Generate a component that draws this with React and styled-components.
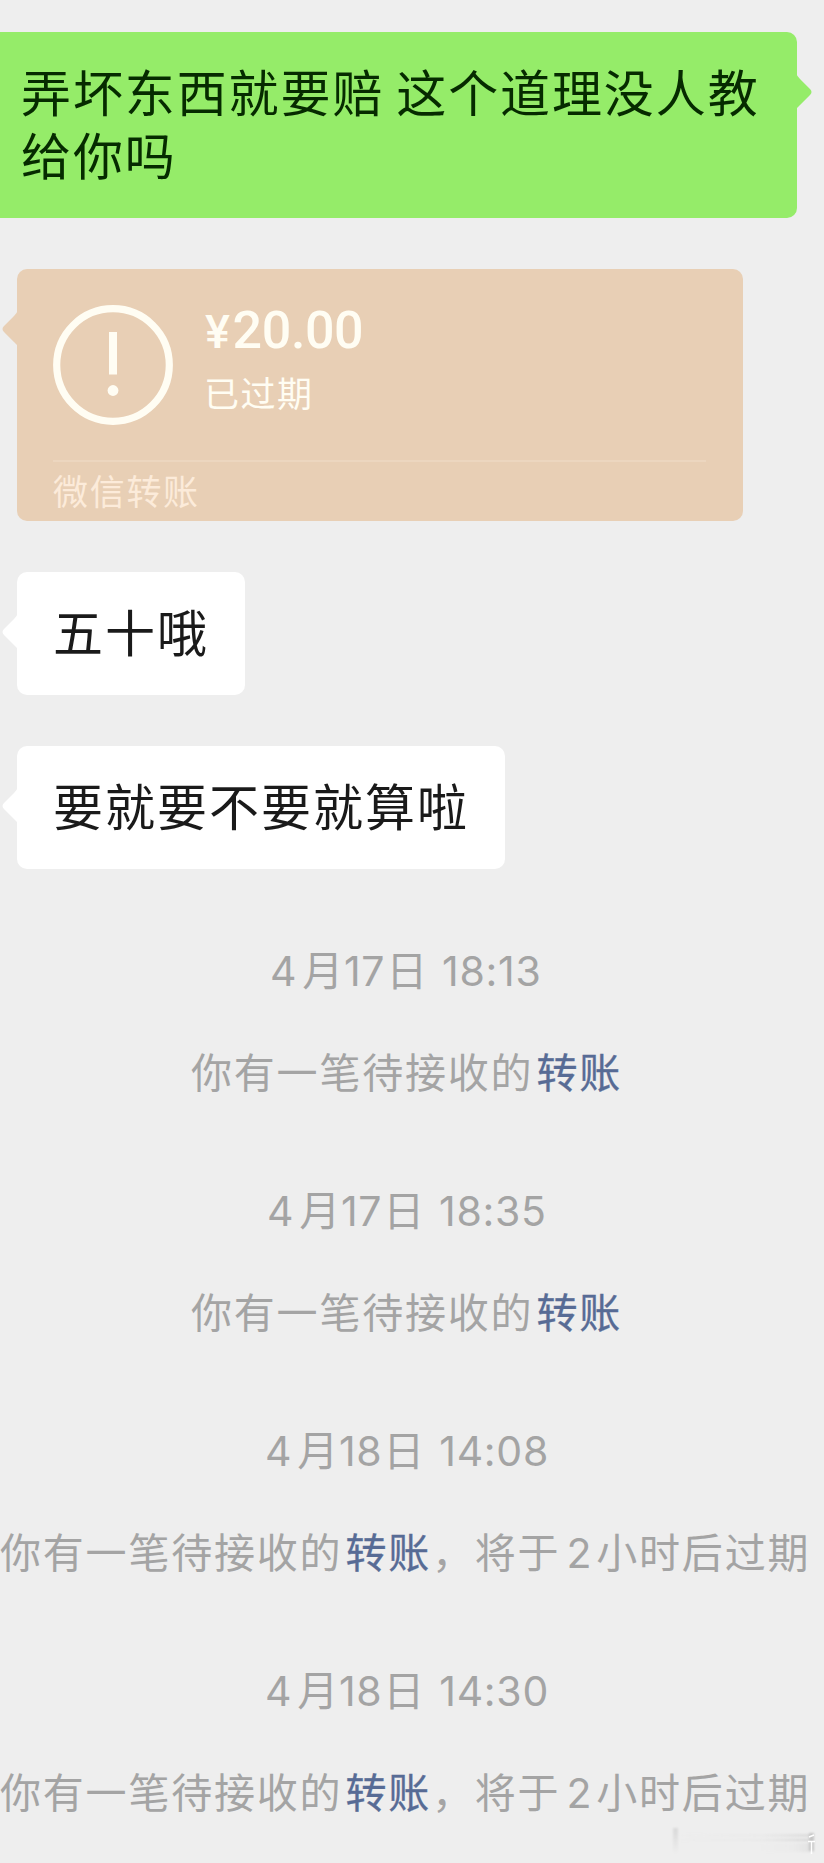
import React from 'react';
import styled, { createGlobalStyle } from 'styled-components';

const GlobalStyle = createGlobalStyle`
  body {
    margin: 0;
    background: #eeeeee;
  }
`
const Page = styled.div`
  position: relative;
  box-sizing: border-box;
  width: 824px;
  height: 1863px;
  padding-top: 32px;
  overflow: hidden;
  display: flex;
  flex-direction: column;
  align-items: flex-start;
  background: #eeeeee;
  font-family: Inter, "Noto Sans CJK SC", sans-serif;
`
const Bubble = styled.div`
  position: relative;
  box-sizing: border-box;
  flex-shrink: 0;
  height: 123px;
  margin: 0 0 51px 17px;
  padding: 31px 36px 0 36px;
  border-radius: 10px;
  background: #ffffff;
  color: #1a1a1a;
  font-size: 50px;
  line-height: 63px;
  letter-spacing: 2px;
  white-space: nowrap;
`
const SentBubble = styled(Bubble)`
  width: 797px;
  height: 186px;
  margin: 0 0 51px;
  padding: 31px 0 0 21px;
  border-radius: 0 10px 10px 0;
  background: #95ec69;
  color: #062b00;
  letter-spacing: 1.9px;
  word-spacing: -4px;
`
const Card = styled.div`
  position: relative;
  box-sizing: border-box;
  flex-shrink: 0;
  width: 726px;
  height: 252px;
  margin: 0 0 51px 17px;
  padding: 36px 37px 0 36px;
  border-radius: 10px;
  background: #e8cfb5;
  color: #fffdf3;
`
const CardTop = styled.div`
  display: flex;
  gap: 32px;
  height: 155px;
  border-bottom: 2px solid #ecd6bf;
`
const CardInfo = styled.div`
  display: flex;
  flex-direction: column;
`
const Amount = styled.div`
  font-family: Roboto, sans-serif;
  font-size: 52px;
  font-weight: 500;
  line-height: 52px;
  letter-spacing: -0.4px;
`
const Yen = styled.span`
  font-size: 47px;
  margin-right: 3px;
`
const Status = styled.div`
  font-size: 35px;
  line-height: 52px;
  letter-spacing: 1.5px;
  margin: 10px 0 0 -1px;
`
const CardFooter = styled.div`
  font-size: 35px;
  line-height: 52px;
  letter-spacing: 1.7px;
  margin-top: 4px;
  color: #fcebda;
`
const TailShape = styled.svg`
  position: absolute;
  top: ${props => props.$top}px;
  ${props => props.$right ? 'right: -15px; transform: scaleX(-1);' : 'left: -15px;'}
`
const Notice = styled.div`
  height: 240px;
  width: 100%;
  display: flex;
  flex-direction: column;
  gap: 42px;
  color: #a4a4a4;
  font-size: 41px;
  line-height: 60px;
  white-space: nowrap;
`
const Notices = styled.div`
  width: 100%;
  flex-shrink: 0;
  margin-top: 21px;
`
const Time = styled.div`
  padding-left: ${props => props.$left}px;
  letter-spacing: 0.7px;
  word-spacing: 2px;
`
const Num = styled.span`
  margin: 0 ${props => props.$after}px 0 ${props => props.$before || 0}px;
`
const Tip = styled.div`
  padding-left: ${props => props.$left}px;
  letter-spacing: 1.8px;
`
const Link = styled.span`
  color: #576b95;
  margin: 0 1px 0 3px;
  -webkit-text-stroke: 0.3px #576b95;
`
const Watermark = styled.svg`
  position: absolute;
  left: 670px;
  top: 1824px;
`

const Tail = ({ color, top, right }) => (
  <TailShape width="16" height="38" viewBox="0 0 16 38" $top={top} $right={right}>
    <path d="M16 0Q15 3 12 6L2 16Q-1 19 2 22L12 32Q15 34 16 38Z" fill={color} />
  </TailShape>
)

const notices = [
  { day: '17', clock: '18:13', timeLeft: 270, left: 191 },
  { day: '17', clock: '18:35', timeLeft: 267, left: 191 },
  { day: '18', clock: '14:08', timeLeft: 265, left: 0, hours: 2 },
  { day: '18', clock: '14:30', timeLeft: 265, left: 0, hours: 2 },
]

const App = () => {
  return (
    <>
      <GlobalStyle />
      <Page>
        <SentBubble>
          弄坏东西就要赔 这个道理没人教<br />给你吗
          <Tail color="#95ec69" top={41} right />
        </SentBubble>
        <Card>
          <Tail color="#e8cfb5" top={41} />
          <CardTop>
            <svg width="120" height="120" viewBox="0 0 120 120">
              <circle cx="60" cy="60" r="56.3" fill="none" stroke="#fffdf3" strokeWidth="7.2" />
              <rect x="56" y="27" width="8" height="42.5" fill="#fffdf3" />
              <circle cx="60" cy="85.5" r="5.4" fill="#fffdf3" />
            </svg>
            <CardInfo>
              <Amount><Yen>¥</Yen>20.00</Amount>
              <Status>已过期</Status>
            </CardInfo>
          </CardTop>
          <CardFooter>微信转账</CardFooter>
        </Card>
        <Bubble>
          <Tail color="#ffffff" top={41} />
          五十哦
        </Bubble>
        <Bubble>
          <Tail color="#ffffff" top={41} />
          要就要不要就算啦
        </Bubble>
        <Notices>
          {notices.map(item => (
            <Notice key={item.clock}>
              <Time $left={item.timeLeft}>
                <Num $after={5}>4</Num>月<Num $after={1}>{item.day}</Num>日 {item.clock}
              </Time>
              <Tip $left={item.left}>
                你有一笔待接收的<Link>转账</Link>
                {item.hours && <>，将于<Num $before={6} $after={3}>{item.hours}</Num>小时后过期</>}
              </Tip>
            </Notice>
          ))}
        </Notices>
        <Watermark width="148" height="36" viewBox="0 0 148 36">
          <defs>
            <linearGradient id="streak">
              <stop offset="0" stopColor="#cccccc" stopOpacity="0.05" />
              <stop offset="0.6" stopColor="#cccccc" stopOpacity="0.25" />
              <stop offset="1" stopColor="#bcbcbc" />
            </linearGradient>
            <linearGradient id="edge" x1="0" y1="0" x2="0" y2="1">
              <stop offset="0" stopColor="#d9d9d9" />
              <stop offset="1" stopColor="#eeeeee" />
            </linearGradient>
            <filter id="soft" x="-10%" y="-50%" width="120%" height="200%">
              <feGaussianBlur stdDeviation="1.2" />
            </filter>
          </defs>
          <g filter="url(#soft)">
            <rect x="3" y="4" width="5" height="26" fill="url(#edge)" />
            <rect x="10" y="10" width="134" height="3" fill="url(#streak)" opacity="0.4" />
            <rect x="10" y="15" width="134" height="2" fill="url(#streak)" opacity="0.6" />
            <rect x="90" y="19" width="54" height="9" fill="url(#streak)" opacity="0.3" />
            <rect x="139" y="9" width="5" height="18" fill="#c6c6c6" />
          </g>
          <path d="M139 13L144 11M138 17.5H145M141.5 18V30" stroke="#ffffff" strokeWidth="1.5" fill="none" />
        </Watermark>
      </Page>
    </>
  );
};

export default App;
